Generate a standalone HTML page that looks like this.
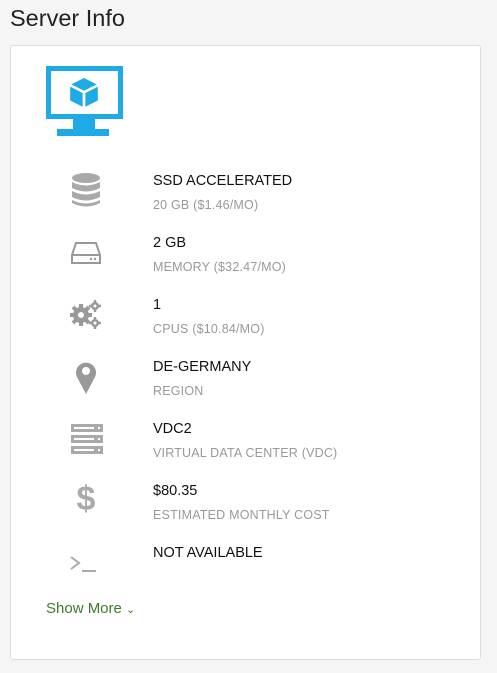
<!DOCTYPE html><html><head><style>
body{margin:0;width:497px;height:673px;background:#f5f5f5;font-family:"Liberation Sans",sans-serif;position:relative;overflow:hidden}
h1{position:absolute;left:10px;top:5px;margin:0;font-weight:normal;font-size:23.5px;color:#222}
.card{position:absolute;left:10px;top:45px;width:469px;height:613px;background:#fff;border:1px solid #ddd;border-radius:3px}
.row{position:absolute;left:0;width:460px}
.ic{position:absolute;left:55px;width:40px;height:36px}
.t{position:absolute;left:142px;top:0;font-size:14.5px;color:#111}
.s{position:absolute;left:142px;top:25px;font-size:12.5px;letter-spacing:0.2px;color:#999}
.more{position:absolute;left:35px;top:554px;font-size:15px;color:#3a7d2a}
</style></head><body>
<h1>Server Info</h1>
<div class="card">
<svg style="position:absolute;left:35px;top:20px" width="78" height="72" viewBox="0 0 78 72">
<rect x="2.5" y="2.5" width="72" height="48" fill="none" stroke="#1eaae7" stroke-width="5"/>
<rect x="27" y="52" width="22" height="12" fill="#1eaae7"/>
<rect x="11" y="63" width="52" height="7" fill="#1eaae7"/>
<g transform="translate(38,27) scale(1.15) translate(-38,-27)">
<polygon points="38,14 49,19.5 38,25 27,19.5" fill="#1eaae7"/>
<polygon points="26,21.5 36.8,27 36.8,39 26,33.5" fill="#1eaae7"/>
<polygon points="50,21.5 39.2,27 39.2,39 50,33.5" fill="#1eaae7"/>
</g>
</svg>
<div class="row" style="top:127px">
<svg class="ic" viewBox="0 0 40 36"><g fill="#a9a9a9"><ellipse cx="20" cy="5" rx="14" ry="5"/><path d="M6 9q14 7 28 0v6q-14 7-28 0z"/><path d="M6 18q14 7 28 0v6q-14 7-28 0z"/><path d="M6 27q14 7 28 0v3q-14 7-28 0z"/></g></svg>
<div class="t">SSD ACCELERATED</div><div class="s">20 GB ($1.46/MO)</div></div>
<div class="row" style="top:189px">
<svg class="ic" viewBox="0 0 40 36"><g fill="none" stroke="#999" stroke-width="2"><path d="M6 20l4-12h20l4 12v8H6z"/><path d="M6 20h28"/></g><circle cx="25" cy="24" r="1.2" fill="#999"/><circle cx="29" cy="24" r="1.2" fill="#999"/></svg>
<div class="t">2 GB</div><div class="s">MEMORY ($32.47/MO)</div></div>
<div class="row" style="top:251px">
<svg class="ic" viewBox="0 0 40 36"><g fill="#999"><circle cx="15" cy="18" r="8"/><g stroke="#999" stroke-width="4"><path d="M15 7v22M4 18h22M7 10l16 16M23 10L7 26"/></g><circle cx="29" cy="9" r="4"/><path d="M29 3v12M23 9h12" stroke="#999" stroke-width="2.5"/><circle cx="29" cy="26" r="4"/><path d="M29 20v12M23 26h12" stroke="#999" stroke-width="2.5"/></g><circle cx="15" cy="18" r="3" fill="#fff"/><circle cx="29" cy="9" r="1.5" fill="#fff"/><circle cx="29" cy="26" r="1.5" fill="#fff"/></svg>
<div class="t">1</div><div class="s">CPUS ($10.84/MO)</div></div>
<div class="row" style="top:313px">
<svg class="ic" viewBox="0 0 40 36"><path d="M20 35L11 18a10 10 0 1 1 18 0z" fill="#999"/><circle cx="20" cy="12" r="4" fill="#fff"/></svg>
<div class="t">DE-GERMANY</div><div class="s">REGION</div></div>
<div class="row" style="top:375px">
<svg class="ic" viewBox="0 0 40 36"><g fill="#aaa"><rect x="5" y="3" width="32" height="8"/><rect x="5" y="14" width="32" height="8"/><rect x="5" y="25" width="32" height="8"/></g><g fill="#fff"><rect x="8" y="6" width="20" height="2"/><rect x="8" y="17" width="20" height="2"/><rect x="8" y="28" width="20" height="2"/><rect x="32" y="6" width="2" height="2"/><rect x="32" y="17" width="2" height="2"/><rect x="32" y="28" width="2" height="2"/></g></svg>
<div class="t">VDC2</div><div class="s">VIRTUAL DATA CENTER (VDC)</div></div>
<div class="row" style="top:437px">
<div class="ic" style="font-size:34px;font-weight:bold;color:#aaa;text-align:center;line-height:36px;top:-2px">$</div>
<div class="t">$80.35</div><div class="s">ESTIMATED MONTHLY COST</div></div>
<div class="row" style="top:499px">
<svg class="ic" viewBox="0 0 40 36"><g fill="none" stroke="#aaa" stroke-width="2"><path d="M5 12l8 6-8 6"/><path d="M16 26h14"/></g></svg>
<div class="t">NOT AVAILABLE</div></div>
<div class="more">Show More <span style="font-size:11px">&#8964;</span></div>
</div>
</body></html>
